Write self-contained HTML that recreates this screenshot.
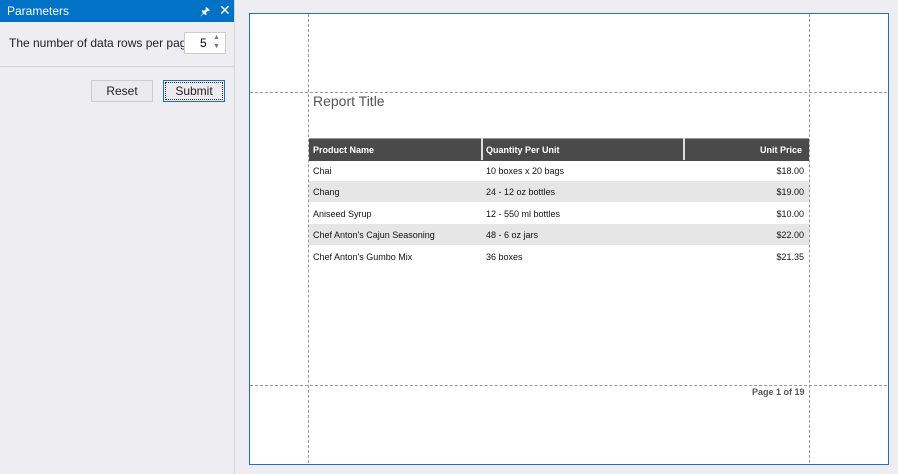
<!DOCTYPE html><html><head><style>
body{margin:0;width:898px;height:474px;background:#eeeef2;font-family:"Liberation Sans",sans-serif;position:relative;overflow:hidden}
.a{position:absolute}
.hd{left:0;top:0;width:234px;height:22px;background:#0173c7;color:#fff;font-size:12px}
.btn{height:20px;border:1px solid #ccc;background:#ebebef;font-size:12px;text-align:center;line-height:20px;color:#222}
.page{left:249px;top:13px;width:638px;height:450px;background:#fff;border:1px solid #1e6fc0}
.dv{width:0;border-left:1px dashed #999}
.dh{height:0;border-top:1px dashed #999}
.row{left:309px;width:500px;height:21px;font-size:9px;color:#111}
.row span{position:absolute;top:6px}
</style></head><body>
<div class="a hd"><span class="a" style="left:7px;top:4px">Parameters</span><span class="a" style="left:200px;top:3px;font-size:11px">&#x1F588;</span><span class="a" style="left:219px;top:2px;font-size:14px">✕</span></div>
<div class="a" style="left:234px;top:0;width:1px;height:474px;background:#d4d4dc"></div>
<div class="a" style="left:9px;top:36px;font-size:12px;color:#222">The number of data rows per page</div>
<div class="a" style="left:184px;top:32px;width:40px;height:20px;background:#fff;border:1px solid #ccc"><span class="a" style="left:15px;top:3px;font-size:12px">5</span><span class="a" style="left:28px;top:1px;font-size:7px;color:#777">▲</span><span class="a" style="left:28px;top:10px;font-size:7px;color:#777">▼</span></div>
<div class="a" style="left:0;top:66px;width:234px;height:1px;background:#d4d4dc"></div>
<div class="a btn" style="left:91px;top:80px;width:60px">Reset</div>
<div class="a btn" style="left:163px;top:80px;width:60px;border:1px solid #1e6fc0;outline:1px dotted #333;outline-offset:-3px">Submit</div>
<div class="a page"></div>
<div class="a dv" style="left:308px;top:14px;height:449px"></div>
<div class="a dv" style="left:809px;top:14px;height:449px"></div>
<div class="a dh" style="left:250px;top:92px;width:637px"></div>
<div class="a dh" style="left:250px;top:385px;width:637px"></div>
<div class="a" style="left:313px;top:93px;font-size:14px;color:#555">Report Title</div>
<div class="a" style="left:309px;top:138px;width:500px;height:22px;background:#4a4a4a;border-top:1px solid #999"></div>
<div class="a" style="left:481px;top:138px;width:2px;height:22px;background:#ddd"></div>
<div class="a" style="left:683px;top:138px;width:2px;height:22px;background:#ddd"></div>
<div class="a" style="left:313px;top:145px;font-size:9px;color:#fff;font-weight:bold">Product Name</div>
<div class="a" style="left:486px;top:145px;font-size:9px;color:#fff;font-weight:bold">Quantity Per Unit</div>
<div class="a" style="left:760px;top:145px;font-size:9px;color:#fff;font-weight:bold">Unit Price</div>
<div class="a row" style="top:160px"><span style="left:4px">Chai</span><span style="left:177px">10 boxes x 20 bags</span><span style="right:5px">$18.00</span></div>
<div class="a row" style="top:181px;background:#e6e6e6"><span style="left:4px">Chang</span><span style="left:177px">24 - 12 oz bottles</span><span style="right:5px">$19.00</span></div>
<div class="a row" style="top:203px"><span style="left:4px">Aniseed Syrup</span><span style="left:177px">12 - 550 ml bottles</span><span style="right:5px">$10.00</span></div>
<div class="a row" style="top:224px;background:#e6e6e6"><span style="left:4px">Chef Anton's Cajun Seasoning</span><span style="left:177px">48 - 6 oz jars</span><span style="right:5px">$22.00</span></div>
<div class="a row" style="top:246px"><span style="left:4px">Chef Anton's Gumbo Mix</span><span style="left:177px">36 boxes</span><span style="right:5px">$21.35</span></div>
<div class="a" style="left:752px;top:387px;font-size:9px;color:#555;font-weight:bold">Page 1 of 19</div>
</body></html>
